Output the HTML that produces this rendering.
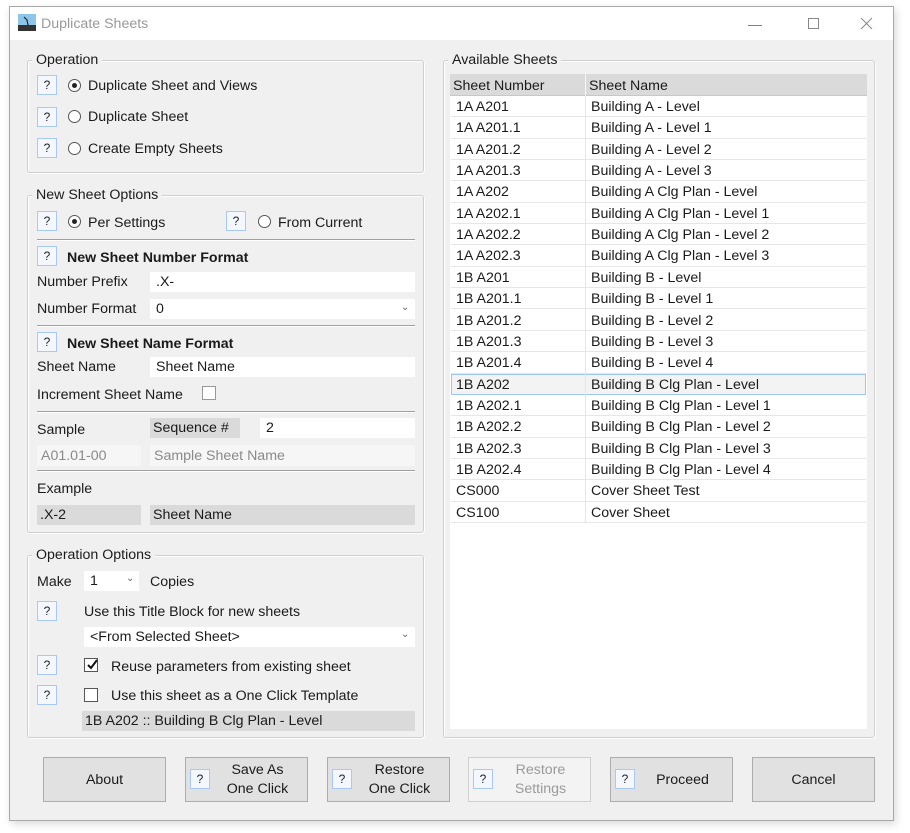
<!DOCTYPE html>
<html><head><meta charset="utf-8"><style>
*{box-sizing:border-box;margin:0;padding:0}
body{width:910px;height:833px;background:#fff;font-family:"Segoe UI","Liberation Sans",sans-serif;font-size:14.2px;color:#1a1a1a;position:relative;overflow:hidden}
.a{position:absolute;white-space:nowrap;line-height:16px;margin-top:1px}
.win{position:absolute;left:9px;top:6px;width:885px;height:815px;border:1px solid #a8a8a8;background:#f0f0f0;box-shadow:2px 3px 8px rgba(0,0,0,.15)}
.tb{position:absolute;left:0;top:0;width:883px;height:33px;background:#fff}
.gb{position:absolute;border:1px solid #cfcfcf;border-radius:3px;box-shadow:inset 1px 1px 0 #fff,1px 1px 0 #fff}
.gl{position:absolute;background:#f0f0f0;padding:0 4px;line-height:16px}
.q{position:absolute;width:20px;height:20px;border:1px solid #a9c8f2;background:#f4f8fe;font-size:12px;text-align:center;line-height:18px;color:#222}
.r{position:absolute;width:13px;height:13px;border:1px solid #555;border-radius:50%;background:#fff}
.r.on::after{content:"";position:absolute;left:3px;top:3px;width:5px;height:5px;border-radius:50%;background:#222}
.sep{position:absolute;height:2px;border-top:1px solid #a0a0a0;border-bottom:1px solid #fff}
.inp{position:absolute;background:#fff;height:20px;line-height:21px;padding-left:6px;white-space:nowrap}
.dis{position:absolute;background:#f6f6f6;color:#8a8a8a;height:21px;line-height:22px;padding-left:4px}
.gr{position:absolute;background:#dadada;height:20px;line-height:21px;padding-left:3px;white-space:nowrap}
.cb{position:absolute;width:14px;height:14px;border:1px solid #555;background:#fff}
.btn{position:absolute;top:757px;height:45px;width:123px;border:1px solid #adadad;background:#e1e1e1;text-align:center}
.btn .t{position:absolute;left:0;right:0;top:1px;bottom:0;display:flex;align-items:center;justify-content:center;line-height:19px}
.row{position:absolute;left:451px;width:415px;height:21.35px;border-bottom:1px solid #e6e6e6;background:#fff}
.row span{position:absolute;top:3px;line-height:16px;white-space:nowrap}
.chev{position:absolute;font-size:10px;color:#666}
</style></head><body>
<div class="win">
 <div class="tb">
  <svg style="position:absolute;left:8px;top:7px" width="18" height="17"><rect width="18" height="17" fill="#8ec5ea"/><rect y="11" width="18" height="6" fill="#333"/><path d="M6 3l3 3 1 5" stroke="#222" fill="none" stroke-width="1.2"/></svg>
  <div class="a" style="left:31px;top:8px;color:#999;font-size:14.2px">Duplicate Sheets</div>
  <div class="a" style="left:738px;top:8px;color:#777;font-size:14px">—</div>
  <div style="position:absolute;left:798px;top:11px;width:11px;height:11px;border:1px solid #888"></div>
  <svg style="position:absolute;left:850px;top:10px" width="13" height="13"><path d="M1 1L12 12M12 1L1 12" stroke="#888" stroke-width="1"/></svg>
 </div>
</div>

<div class="gb" style="left:27px;top:60px;width:397px;height:113px"></div>
<div class="gl" style="left:32px;top:52px">Operation</div>
<div class="q" style="left:37px;top:75px">?</div><div class="r on" style="left:68px;top:79px"></div><div class="a" style="left:88px;top:77px">Duplicate Sheet and Views</div>
<div class="q" style="left:37px;top:107px">?</div><div class="r" style="left:68px;top:110px"></div><div class="a" style="left:88px;top:108px">Duplicate Sheet</div>
<div class="q" style="left:37px;top:138px">?</div><div class="r" style="left:68px;top:142px"></div><div class="a" style="left:88px;top:140px">Create Empty Sheets</div>

<div class="gb" style="left:27px;top:195px;width:397px;height:338px"></div>
<div class="gl" style="left:32px;top:187px">New Sheet Options</div>
<div class="q" style="left:37px;top:211px">?</div><div class="r on" style="left:68px;top:215px"></div><div class="a" style="left:88px;top:214px">Per Settings</div>
<div class="q" style="left:226px;top:211px">?</div><div class="r" style="left:258px;top:215px"></div><div class="a" style="left:278px;top:214px">From Current</div>
<div class="sep" style="left:37px;top:239px;width:378px"></div>
<div class="q" style="left:37px;top:246px">?</div><div class="a" style="left:67px;top:249px;font-weight:bold">New Sheet Number Format</div>
<div class="a" style="left:37px;top:273px">Number Prefix</div><div class="inp" style="left:150px;top:272px;width:265px">.X-</div>
<div class="a" style="left:37px;top:300px">Number Format</div><div class="inp" style="left:150px;top:299px;width:265px">0</div><div class="chev" style="left:401px;top:302px">⌄</div>
<div class="sep" style="left:37px;top:325px;width:378px"></div>
<div class="q" style="left:37px;top:332px">?</div><div class="a" style="left:67px;top:335px;font-weight:bold">New Sheet Name Format</div>
<div class="a" style="left:37px;top:358px">Sheet Name</div><div class="inp" style="left:150px;top:357px;width:265px">Sheet Name</div>
<div class="a" style="left:37px;top:386px">Increment Sheet Name</div><div class="cb" style="left:202px;top:386px;border-color:#999"></div>
<div class="sep" style="left:37px;top:411px;width:378px"></div>
<div class="a" style="left:37px;top:421px">Sample</div>
<div class="gr" style="left:150px;top:418px;width:90px">Sequence #</div>
<div class="inp" style="left:260px;top:418px;width:155px">2</div>
<div class="dis" style="left:37px;top:445px;width:104px">A01.01-00</div>
<div class="dis" style="left:150px;top:445px;width:265px">Sample Sheet Name</div>
<div class="sep" style="left:37px;top:470px;width:378px"></div>
<div class="a" style="left:37px;top:480px">Example</div>
<div class="gr" style="left:37px;top:505px;width:104px">.X-2</div>
<div class="gr" style="left:150px;top:505px;width:265px">Sheet Name</div>

<div class="gb" style="left:27px;top:555px;width:397px;height:183px"></div>
<div class="gl" style="left:32px;top:547px">Operation Options</div>
<div class="a" style="left:37px;top:573px">Make</div>
<div class="inp" style="left:84px;top:571px;width:55px">1</div><div class="chev" style="left:126px;top:573px">⌄</div>
<div class="a" style="left:150px;top:573px">Copies</div>
<div class="q" style="left:37px;top:601px">?</div><div class="a" style="left:84px;top:603px">Use this Title Block for new sheets</div>
<div class="inp" style="left:84px;top:627px;width:331px">&lt;From Selected Sheet&gt;</div><div class="chev" style="left:401px;top:629px">⌄</div>
<div class="q" style="left:37px;top:655px">?</div>
<div class="cb" style="left:84px;top:658px"></div><svg style="position:absolute;left:85px;top:658px" width="14" height="14"><path d="M3 7l3 3 6-8" stroke="#111" stroke-width="2" fill="none"/></svg>
<div class="a" style="left:111px;top:658px">Reuse parameters from existing sheet</div>
<div class="q" style="left:37px;top:685px">?</div><div class="cb" style="left:84px;top:688px"></div><div class="a" style="left:111px;top:687px">Use this sheet as a One Click Template</div>
<div class="gr" style="left:82px;top:711px;width:333px">1B A202 :: Building B Clg Plan - Level</div>

<div class="gb" style="left:443px;top:60px;width:432px;height:678px"></div>
<div class="gl" style="left:448px;top:52px">Available Sheets</div>
<div style="position:absolute;left:450px;top:74px;width:417px;height:655px;background:#fff"></div>
<div style="position:absolute;left:450px;top:74px;width:417px;height:22px;background:#dadada;border-bottom:1px solid #c8c8c8"></div>
<div style="position:absolute;left:585px;top:74px;width:1px;height:22px;background:#f8f8f8"></div>
<div class="a" style="left:453px;top:77px">Sheet Number</div><div class="a" style="left:589px;top:77px">Sheet Name</div>
<div class="row" style="top:96px"><span style="left:5px">1A A201</span><span style="left:140px">Building A - Level</span></div>
<div class="row" style="top:117.35px"><span style="left:5px">1A A201.1</span><span style="left:140px">Building A - Level 1</span></div>
<div class="row" style="top:138.7px"><span style="left:5px">1A A201.2</span><span style="left:140px">Building A - Level 2</span></div>
<div class="row" style="top:160.05px"><span style="left:5px">1A A201.3</span><span style="left:140px">Building A - Level 3</span></div>
<div class="row" style="top:181.4px"><span style="left:5px">1A A202</span><span style="left:140px">Building A Clg Plan - Level</span></div>
<div class="row" style="top:202.75px"><span style="left:5px">1A A202.1</span><span style="left:140px">Building A Clg Plan - Level 1</span></div>
<div class="row" style="top:224.1px"><span style="left:5px">1A A202.2</span><span style="left:140px">Building A Clg Plan - Level 2</span></div>
<div class="row" style="top:245.45px"><span style="left:5px">1A A202.3</span><span style="left:140px">Building A Clg Plan - Level 3</span></div>
<div class="row" style="top:266.8px"><span style="left:5px">1B A201</span><span style="left:140px">Building B - Level</span></div>
<div class="row" style="top:288.15px"><span style="left:5px">1B A201.1</span><span style="left:140px">Building B - Level 1</span></div>
<div class="row" style="top:309.5px"><span style="left:5px">1B A201.2</span><span style="left:140px">Building B - Level 2</span></div>
<div class="row" style="top:330.85px"><span style="left:5px">1B A201.3</span><span style="left:140px">Building B - Level 3</span></div>
<div class="row" style="top:352.2px"><span style="left:5px">1B A201.4</span><span style="left:140px">Building B - Level 4</span></div>
<div class="row" style="top:373.55px;background:#f3f3f3;border:1px solid #9cc8ef"><span style="left:4px;top:2px">1B A202</span><span style="left:139px;top:2px">Building B Clg Plan - Level</span></div>
<div class="row" style="top:394.9px"><span style="left:5px">1B A202.1</span><span style="left:140px">Building B Clg Plan - Level 1</span></div>
<div class="row" style="top:416.25px"><span style="left:5px">1B A202.2</span><span style="left:140px">Building B Clg Plan - Level 2</span></div>
<div class="row" style="top:437.6px"><span style="left:5px">1B A202.3</span><span style="left:140px">Building B Clg Plan - Level 3</span></div>
<div class="row" style="top:458.95px"><span style="left:5px">1B A202.4</span><span style="left:140px">Building B Clg Plan - Level 4</span></div>
<div class="row" style="top:480.3px"><span style="left:5px">CS000</span><span style="left:140px">Cover Sheet Test</span></div>
<div class="row" style="top:501.65px"><span style="left:5px">CS100</span><span style="left:140px">Cover Sheet</span></div>
<div style="position:absolute;left:585px;top:96px;width:1px;height:427px;background:#e6e6e6"></div>

<div class="btn" style="left:43px"><div class="t">About</div></div>
<div class="btn" style="left:185px"><div class="q" style="left:4px;top:11px">?</div><div class="t" style="left:22px">Save As<br>One Click</div></div>
<div class="btn" style="left:327px"><div class="q" style="left:4px;top:11px">?</div><div class="t" style="left:22px">Restore<br>One Click</div></div>
<div class="btn" style="left:468px;background:#f3f3f3;border-color:#cfcfcf;color:#9a9a9a"><div class="q" style="left:4px;top:11px">?</div><div class="t" style="left:22px">Restore<br>Settings</div></div>
<div class="btn" style="left:610px"><div class="q" style="left:4px;top:11px">?</div><div class="t" style="left:22px">Proceed</div></div>
<div class="btn" style="left:752px"><div class="t">Cancel</div></div>
</body></html>
